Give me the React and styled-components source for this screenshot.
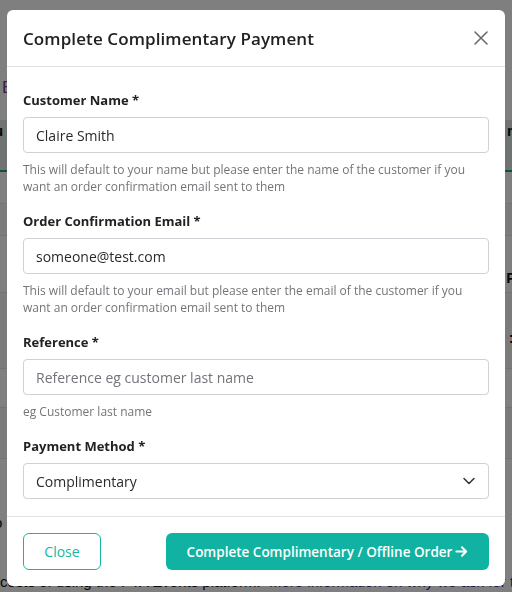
import React from "react";
import styled, { createGlobalStyle } from "styled-components";

const GlobalStyle = createGlobalStyle`
  html, body {
    margin: 0;
    padding: 0;
    background: #ffffff;
  }
  body {
    font-family: "Open Sans", "Liberation Sans", sans-serif;
    color: #212529;
    overflow: hidden;
  }
  * {
    box-sizing: border-box;
  }
`;

/* page that sits behind the dialog */
const Page = styled.div`
  height: 592px;
  padding: 78px 0 0 0;
  font-family: "Liberation Sans", Arial, sans-serif;
  font-size: 15px;
  color: #111;
`;

const PageLink = styled.div`
  color: #7a3a9a;
  font-size: 17px;
  padding-left: 2px;
  height: 42px;
`;

const Table = styled.div`
  display: flex;
  flex-direction: column;
`;

const TableHead = styled.div`
  height: 52px;
  background: #dfe8e7;
  border-bottom: 2px solid #2a9d8c;
  display: flex;
  justify-content: space-between;
  padding: 2px 0 0;
  font-weight: 700;
  font-size: 15px;
`;

const TableRow = styled.div`
  height: ${(p) => p.$h}px;
  border-bottom: 1px solid ${(p) => (p.$line ? "#e4e4e4" : "transparent")};
  background: ${(p) => (p.$shade ? "#f6f6f6" : "#ffffff")};
  display: flex;
  justify-content: space-between;
  align-items: center;
  padding-top: ${(p) => p.$offset || 0}px;
  font-size: 15px;
`;

const EdgeText = styled.span`
  font-weight: ${(p) => (p.$bold ? 700 : 400)};
  margin: ${(p) => (p.$left ? "0 0 0 -6px" : "0 -10px 0 0")};
`;

const PageFoot = styled.div`
  margin-top: 4px;
  white-space: nowrap;
  font-size: 15px;
  color: #111;

  span {
    color: #3b2a8a;
  }
`;

const Backdrop = styled.div`
  position: fixed;
  inset: 0;
  background: rgba(0, 0, 0, 0.5);
  padding: 10px 7px;
`;

const Dialog = styled.div`
  width: 498px;
  background: #ffffff;
  border-radius: 6px;
  overflow: hidden;
`;

const Header = styled.div`
  height: 57px;
  display: flex;
  align-items: center;
  justify-content: space-between;
  padding: 0 16px;
  border-bottom: 1px solid #e3e0e8;
`;

const Title = styled.h2`
  margin: 0;
  font-size: 17px;
  font-weight: 600;
  color: #212121;
  letter-spacing: 0.1px;
`;

const CloseIcon = styled.button`
  border: 0;
  background: transparent;
  padding: 0;
  width: 16px;
  height: 16px;
  display: flex;
  color: #6b6b6b;
`;

const Body = styled.div`
  padding: 24px 16px 17px;
  border-bottom: 1px solid #e3e0e8;
`;

const Field = styled.div`
  display: flex;
  flex-direction: column;
  margin-bottom: 17px;

  &:last-child {
    margin-bottom: 0;
  }
`;

const Label = styled.label`
  font-size: 13px;
  font-weight: 700;
  color: #222;
  line-height: 18px;
  margin-bottom: 8px;
`;

const Input = styled.div`
  height: 36px;
  border: 1px solid #d2d0d6;
  border-radius: 4px;
  padding: 0 12px;
  display: flex;
  align-items: center;
  justify-content: space-between;
  font-size: 14px;
  color: ${(p) => (p.$placeholder ? "#74737a" : "#2a2a2a")};
`;

const Help = styled.div`
  margin-top: 8px;
  font-size: 12px;
  line-height: 17px;
  color: #75747a;
`;

const Footer = styled.div`
  display: flex;
  justify-content: space-between;
  align-items: center;
  padding: 16px 16px 16px;
`;

const OutlineButton = styled.button`
  height: 37px;
  width: 78px;
  border: 1px solid #19b4a2;
  border-radius: 6px;
  background: #fff;
  color: #19b4a2;
  font-family: inherit;
  font-size: 14px;
`;

const PrimaryButton = styled.button`
  height: 37px;
  width: 323px;
  border: 0;
  border-radius: 6px;
  background: #10b3a1;
  color: #fff;
  font-family: inherit;
  font-size: 13.5px;
  font-weight: 600;
  display: flex;
  align-items: center;
  justify-content: center;
  gap: 3px;
`;

const rows = [
  { h: 32, line: true },
  { h: 32, line: true, shade: true },
  { h: 57, line: true, right: "Pr", offset: 26 },
  { h: 76, line: true, right: ":2", shade: true, offset: 14 },
  { h: 39, line: true },
  { h: 51, line: true, shade: true },
  { h: 110, left: "o", offset: 18 },
];

export default function App() {
  return (
    <>
      <GlobalStyle />
      <Page>
        <PageLink>E</PageLink>
        <Table>
          <TableHead>
            <EdgeText $bold $left>
              u
            </EdgeText>
            <EdgeText $bold>ro</EdgeText>
          </TableHead>
          {rows.map((r, i) => (
            <TableRow
              key={i}
              $h={r.h}
              $shade={r.shade}
              $line={r.line}
              $offset={r.offset}
            >
              <EdgeText $left>{r.left || ""}</EdgeText>
              <EdgeText $bold>{r.right || ""}</EdgeText>
            </TableRow>
          ))}
        </Table>
        <PageFoot>
          costs of using the PTA Events platform. &nbsp;
          <span>More information on why we ask for this</span>
        </PageFoot>
      </Page>

      <Backdrop>
        <Dialog>
          <Header>
            <Title>Complete Complimentary Payment</Title>
            <CloseIcon aria-label="Close">
              <svg width="16" height="16" viewBox="0 0 16 16">
                <path
                  d="M2 2 L14 14 M14 2 L2 14"
                  stroke="currentColor"
                  strokeWidth="1.6"
                  strokeLinecap="round"
                />
              </svg>
            </CloseIcon>
          </Header>

          <Body>
            <Field>
              <Label>Customer Name *</Label>
              <Input>Claire Smith</Input>
              <Help>
                This will default to your name but please enter the name of the
                customer if you want an order confirmation email sent to them
              </Help>
            </Field>
            <Field>
              <Label>Order Confirmation Email *</Label>
              <Input>someone@test.com</Input>
              <Help>
                This will default to your email but please enter the email of
                the customer if you want an order confirmation email sent to
                them
              </Help>
            </Field>
            <Field>
              <Label>Reference *</Label>
              <Input $placeholder>Reference eg customer last name</Input>
              <Help>eg Customer last name</Help>
            </Field>
            <Field>
              <Label>Payment Method *</Label>
              <Input>
                Complimentary
                <svg width="14" height="14" viewBox="0 0 14 14">
                  <polyline
                    points="2,4.5 7,9.5 12,4.5"
                    fill="none"
                    stroke="#333"
                    strokeWidth="1.5"
                    strokeLinecap="round"
                    strokeLinejoin="round"
                  />
                </svg>
              </Input>
            </Field>
          </Body>

          <Footer>
            <OutlineButton>Close</OutlineButton>
            <PrimaryButton>
              Complete Complimentary / Offline Order
              <svg width="13" height="13" viewBox="0 0 14 14">
                <path
                  d="M1.5 7 H12 M7.5 2.5 L12 7 L7.5 11.5"
                  fill="none"
                  stroke="#fff"
                  strokeWidth="2.2"
                  strokeLinecap="round"
                  strokeLinejoin="round"
                />
              </svg>
            </PrimaryButton>
          </Footer>
        </Dialog>
      </Backdrop>
    </>
  );
}
